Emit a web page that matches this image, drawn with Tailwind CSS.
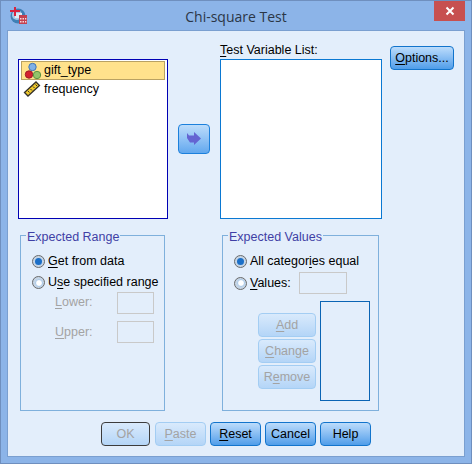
<!DOCTYPE html>
<html lang="en">

<head>
    <meta charset="UTF-8">
    <script src="https://cdn.jsdelivr.net/npm/@tailwindcss/browser@4"></script>
    <title>Chi-square Test</title>
</head>

<body class="w-[472px] h-[464px] overflow-hidden bg-[#8cb4e8] font-['Liberation_Sans',sans-serif] text-[12.5px] text-black [&_u]:underline-offset-2">
    <div class="w-[472px] h-[464px] border border-[#6f8fbe]">
        <!-- Title bar -->
        <div class="relative h-[29px] flex items-center justify-center">
            <svg class="absolute left-[9px] top-[6px]" width="18" height="18" viewBox="0 0 18 18">
                <circle cx="8" cy="9" r="7.500" fill="#3f7fb5" />
                <circle cx="7" cy="8" r="5" fill="#a9c8e4" />
                <path d="M5 6h7v5H5z" fill="#dfe9f3" />
                <path d="M0 3h10v2H0zM4 0h2v9H4z" fill="#d9233f" />
                <path d="M9 8h8v9H9z" fill="#c4404f" />
                <path d="M10 11h1.500v1.500H10zM12.500 11H14v1.500h-1.500zM15 11h1.300v1.500H15zM10 14h1.500v1.500H10zM12.500 14H14v1.500h-1.500zM15 14h1.300v1.500H15z" fill="#f6d9dc" />
            </svg>
            <span class="font-['Open_Sans',sans-serif] text-[14px] text-[#2b3646] pt-[1px]">Chi-square Test</span>
            <div class="absolute left-[433px] top-0 w-[31px] h-[20px] bg-[#c75050] flex items-center justify-center">
                <svg width="10" height="10" viewBox="0 0 10 10">
                    <path d="M1.500 1.500l7 7M8.500 1.500l-7 7" stroke="#fff" stroke-width="2" />
                </svg>
            </div>
        </div>

        <!-- Client area -->
        <div class="mx-[6px] h-[427px] border border-[#7a9fd0] bg-[#e3eefb]">
            <div class="flex h-[188px]">
                <!-- Source list -->
                <div class="ml-[10px] mt-[28px] w-[150px] h-[160px] border border-[#0000b4] bg-white pt-[1px] pl-[2px]">
                    <div class="w-[144px] h-[19px] border border-[#b9a262] bg-[#ffe28c] flex items-center">
                        <svg class="ml-[1px]" width="20" height="18" viewBox="0 0 20 18">
                            <circle cx="9.500" cy="5" r="3.700" fill="#7fb0e6" stroke="#3f74b4" />
                            <circle cx="6" cy="12.500" r="3.700" fill="#d4202f" stroke="#9c1a28" />
                            <circle cx="14" cy="13" r="3.700" fill="#93c46a" stroke="#5e9440" />
                        </svg>
                        <span class="ml-[1px]">gift_type</span>
                    </div>
                    <div class="h-[18px] flex items-center">
                        <svg class="ml-[2px]" width="18" height="16" viewBox="0 0 18 16">
                            <path d="M1.500 11.500L13 1l3.500 3.500L5 15z" fill="#f0c92c" stroke="#33302a" stroke-width="1.300" />
                            <path d="M5 10l1.500 1.500M7.500 8L9 9.500M10 5.500l1.500 1.500M12.500 3.500L14 5" stroke="#33302a" />
                        </svg>
                        <span class="ml-[3px]">frequency</span>
                    </div>
                </div>

                <!-- Move arrow -->
                <div class="ml-[10px] mt-[93px] w-[32px] h-[30px] rounded-[4px] border border-[#1c80dc] bg-linear-to-b from-[#bcdcfb] to-[#62a8ee] flex items-center justify-center">
                    <svg width="16" height="14" viewBox="0 0 16 14">
                        <path d="M8 0L15 6.500L8 13V10.500H4L1 6V1L3 3.500H8z" fill="#6464d2" />
                    </svg>
                </div>

                <!-- Test variable list -->
                <div class="ml-[10px] w-[162px]">
                    <div class="h-[28px] pt-[12px] leading-[15px]"><u>T</u>est Variable List:</div>
                    <div class="h-[160px] border border-[#0a78d2] bg-white"></div>
                </div>

                <button class="ml-[8px] mt-[15px] w-[64px] h-[24px] rounded-[4px] border border-[#1274cc] bg-linear-to-b from-[#bcdcfb] to-[#4f9de9]"><u>O</u>ptions...</button>
            </div>

            <div class="flex mt-[16px]">
                <!-- Expected Range -->
                <div class="relative ml-[12px] w-[145px] h-[176px] border border-[#7fb0dc] pt-[15px] pl-[11px]">
                    <span class="absolute left-[5px] -top-[6px] px-[1px] bg-[#e3eefb] leading-[15px] text-[#3f3fa5]">Expected Range</span>
                    <div class="h-[21px] flex items-center gap-[3px]">
                        <div class="w-[13px] h-[13px] rounded-full border border-[#6b6b6b] bg-[#c5d5e6] flex items-center justify-center">
                            <div class="w-[7px] h-[7px] rounded-full bg-[#1b6fc8]"></div>
                        </div>
                        <span><u>G</u>et from data</span>
                    </div>
                    <div class="h-[21px] flex items-center gap-[3px]">
                        <div class="w-[13px] h-[13px] rounded-full border border-[#6b6b6b] bg-[#c5d5e6] flex items-center justify-center">
                            <div class="w-[8px] h-[8px] rounded-full bg-white border border-[#a8c8e8]"></div>
                        </div>
                        <span>U<u>s</u>e specified range</span>
                    </div>
                    <div class="-mt-[1px] ml-[23px] flex items-center h-[22px] text-[#a3a3a3]">
                        <span class="w-[62px] -mt-[1px]"><u>L</u>ower:</span>
                        <div class="w-[37px] h-[22px] border border-[#c9c9c9]"></div>
                    </div>
                    <div class="mt-[7px] ml-[23px] flex items-center h-[22px] text-[#a3a3a3]">
                        <span class="w-[62px]"><u>U</u>pper:</span>
                        <div class="w-[37px] h-[22px] border border-[#c9c9c9]"></div>
                    </div>
                </div>

                <!-- Expected Values -->
                <div class="relative ml-[57px] w-[157px] h-[176px] border border-[#7fb0dc] pt-[15px] pl-[11px]">
                    <span class="absolute left-[5px] -top-[6px] px-[1px] bg-[#e3eefb] leading-[15px] text-[#3f3fa5]">Expected Values</span>
                    <div class="h-[21px] flex items-center gap-[3px]">
                        <div class="w-[13px] h-[13px] rounded-full border border-[#6b6b6b] bg-[#c5d5e6] flex items-center justify-center">
                            <div class="w-[7px] h-[7px] rounded-full bg-[#1b6fc8]"></div>
                        </div>
                        <span>All categor<u>i</u>es equal</span>
                    </div>
                    <div class="h-[22px] flex items-center gap-[3px]">
                        <div class="w-[13px] h-[13px] rounded-full border border-[#6b6b6b] bg-[#c5d5e6] flex items-center justify-center">
                            <div class="w-[8px] h-[8px] rounded-full bg-white border border-[#a8c8e8]"></div>
                        </div>
                        <span class="w-[46px]"><u>V</u>alues:</span>
                        <div class="w-[48px] h-[22px] border border-[#c9c9c9]"></div>
                    </div>
                    <div class="flex mt-[7px] ml-[24px]">
                        <div class="mt-[12px] w-[58px] flex flex-col gap-[2px] text-[#a3a3a3]">
                            <div class="h-[24px] rounded-[4px] border border-[#a3cdf3] bg-linear-to-b from-[#d9eafc] to-[#b4d5f7] flex items-center justify-center"><span><u>A</u>dd</span></div>
                            <div class="h-[24px] rounded-[4px] border border-[#a3cdf3] bg-linear-to-b from-[#d9eafc] to-[#b4d5f7] flex items-center justify-center"><span><u>C</u>hange</span></div>
                            <div class="h-[24px] rounded-[4px] border border-[#a3cdf3] bg-linear-to-b from-[#d9eafc] to-[#b4d5f7] flex items-center justify-center"><span>R<u>e</u>move</span></div>
                        </div>
                        <div class="ml-[4px] w-[50px] h-[100px] border border-[#0a64b4]"></div>
                    </div>
                </div>
            </div>

            <!-- Dialog buttons -->
            <div class="flex mt-[11px] ml-[93px]">
                <div class="w-[49px] h-[24px] rounded-[4px] border border-[#3c3c3c] bg-linear-to-b from-[#d9eafc] to-[#b4d5f7] text-[#a3a3a3] flex items-center justify-center">OK</div>
                <div class="ml-[5px] w-[51px] h-[24px] rounded-[4px] border border-[#a3cdf3] bg-linear-to-b from-[#d9eafc] to-[#b4d5f7] text-[#a3a3a3] flex items-center justify-center"><span><u>P</u>aste</span></div>
                <button class="ml-[4px] w-[51px] h-[24px] rounded-[4px] border border-[#1274cc] bg-linear-to-b from-[#bcdcfb] to-[#4f9de9]"><u>R</u>eset</button>
                <button class="ml-[4px] w-[51px] h-[24px] rounded-[4px] border border-[#1274cc] bg-linear-to-b from-[#bcdcfb] to-[#4f9de9]">Cancel</button>
                <button class="ml-[4px] w-[51px] h-[24px] rounded-[4px] border border-[#1274cc] bg-linear-to-b from-[#bcdcfb] to-[#4f9de9]">Help</button>
            </div>
        </div>
    </div>
</body>

</html>
